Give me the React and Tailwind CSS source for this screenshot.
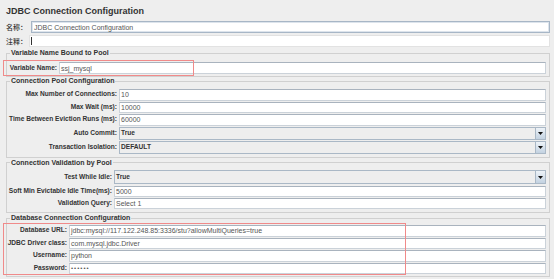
import React from "react";

const labelBase = "shrink-0 flex items-center justify-end pr-[2px] text-[6.6px] font-bold leading-none text-[#333] whitespace-nowrap";

function Row({ label, lw, h, children }) {
    return (
        <div className={`flex items-stretch ${h}`}>
            <div className={`${lw} ${labelBase}`}>{label}</div>
            {children}
        </div>
    );
}

function TextBox({ value, secret }) {
    return (
        <div className="flex-1 min-w-0 flex items-center bg-white border border-[#cbd2d9] border-t-[#a9b3be] pl-[1px] text-[7px] leading-none text-[#555] whitespace-nowrap overflow-hidden">
            {secret ? <span className="tracking-[1px] text-[6px]">{value}</span> : value}
        </div>
    );
}

function Combo({ value }) {
    return (
        <div className="flex-1 min-w-0 flex items-stretch bg-[#eeeeee] border border-[#aab8c6]">
            <div className="flex-1 flex items-center pl-[1px] text-[6.6px] font-bold leading-none text-[#333]">{value}</div>
            <div className="w-[10px] border-l border-[#aab8c6] bg-gradient-to-b from-[#eef3f8] to-[#c3d2e1] flex items-center justify-center">
                <svg width="5" height="3" viewBox="0 0 5 3"><path d="M0 0h5L2.5 3z" fill="#111" /></svg>
            </div>
        </div>
    );
}

function Group({ title, className, children }) {
    return (
        <fieldset className={`ml-[6px] w-[544px] border border-[#d0d0d0] ${className}`}>
            <legend className="ml-[3px] px-[1px] text-[7px] font-bold leading-[8px] text-[#333]">{title}</legend>
            <div className="flex flex-col pr-[3px]">{children}</div>
        </fieldset>
    );
}

export default function App() {
    return (
        <div className="relative w-[554px] h-[279px] overflow-hidden bg-[#eeeeee] font-['Liberation_Sans','Noto_Sans_CJK_SC',sans-serif]">
            <div className="h-[20px] pt-[5px] pl-[6px] text-[9px] leading-[12px] font-bold text-[#333]">JDBC Connection Configuration</div>

            <div className="mt-[1px] flex items-stretch h-[12px] pl-[6px] pr-[4px]">
                <div className="w-[25px] flex items-center text-[7px] leading-none text-[#333] font-medium">名称：</div>
                <div className="flex-1 flex items-center bg-white border border-[#a7b6c6] shadow-[inset_0_0_0_1px_#dde4ec] pl-[2px] text-[7px] leading-none text-[#555]">JDBC Connection Configuration</div>
            </div>
            <div className="mt-[2px] flex items-stretch h-[12px] pl-[6px] pr-[4px]">
                <div className="w-[23px] flex items-center text-[7px] leading-none text-[#333] font-medium">注释：</div>
                <div className="flex-1 flex items-center bg-white border border-[#e2e2e2] pl-[1px]">
                    <span className="w-px h-[8px] bg-[#333]" />
                </div>
            </div>

            <Group title="Variable Name Bound to Pool" className="mt-[2px] pt-[5px] pb-[2px]">
                <Row label="Variable Name:" lw="w-[52px]" h="h-[12px]"><TextBox value="ssj_mysql" /></Row>
            </Group>

            <Group title="Connection Pool Configuration" className="pt-[4px] pb-[3px]">
                <div className="flex flex-col gap-[1px]">
                    <Row label="Max Number of Connections:" lw="w-[112px]" h="h-[11.5px]"><TextBox value="10" /></Row>
                    <Row label="Max Wait (ms):" lw="w-[112px]" h="h-[11.5px]"><TextBox value="10000" /></Row>
                    <Row label="Time Between Eviction Runs (ms):" lw="w-[112px]" h="h-[11.5px]"><TextBox value="60000" /></Row>
                    <Row label="Auto Commit:" lw="w-[112px]" h="h-[13px]"><Combo value="True" /></Row>
                    <Row label="Transaction Isolation:" lw="w-[112px]" h="h-[13px]"><Combo value="DEFAULT" /></Row>
                </div>
            </Group>

            <Group title="Connection Validation by Pool" className="mt-[1px] pt-[3.5px] pb-[3px]">
                <Row label="Test While Idle:" lw="w-[107px]" h="h-[14px]"><Combo value="True" /></Row>
                <div className="mt-[2px] flex flex-col gap-[1px]">
                    <Row label="Soft Min Evictable Idle Time(ms):" lw="w-[107px]" h="h-[11px]"><TextBox value="5000" /></Row>
                    <Row label="Validation Query:" lw="w-[107px]" h="h-[11px]"><TextBox value="Select 1" /></Row>
                </div>
            </Group>

            <Group title="Database Connection Configuration" className="mt-[1px] pt-[3px] pb-[2px]">
                <div className="flex flex-col gap-[1px]">
                    <Row label="Database URL:" lw="w-[62px]" h="h-[11.5px]"><TextBox value="jdbc:mysql://117.122.248.85:3336/stu?allowMultiQueries=true" /></Row>
                    <Row label="JDBC Driver class:" lw="w-[62px]" h="h-[11.5px]"><TextBox value="com.mysql.jdbc.Driver" /></Row>
                    <Row label="Username:" lw="w-[62px]" h="h-[11.5px]"><TextBox value="python" /></Row>
                    <Row label="Password:" lw="w-[62px]" h="h-[11.5px]"><TextBox value="••••••" secret /></Row>
                </div>
            </Group>

            <div className="absolute left-[3px] top-[60px] w-[191px] h-[16px] border border-[#f08a8a]" />
            <div className="absolute left-[3px] top-[223px] w-[403px] h-[52px] border border-[#f08a8a]" />
        </div>
    );
}
